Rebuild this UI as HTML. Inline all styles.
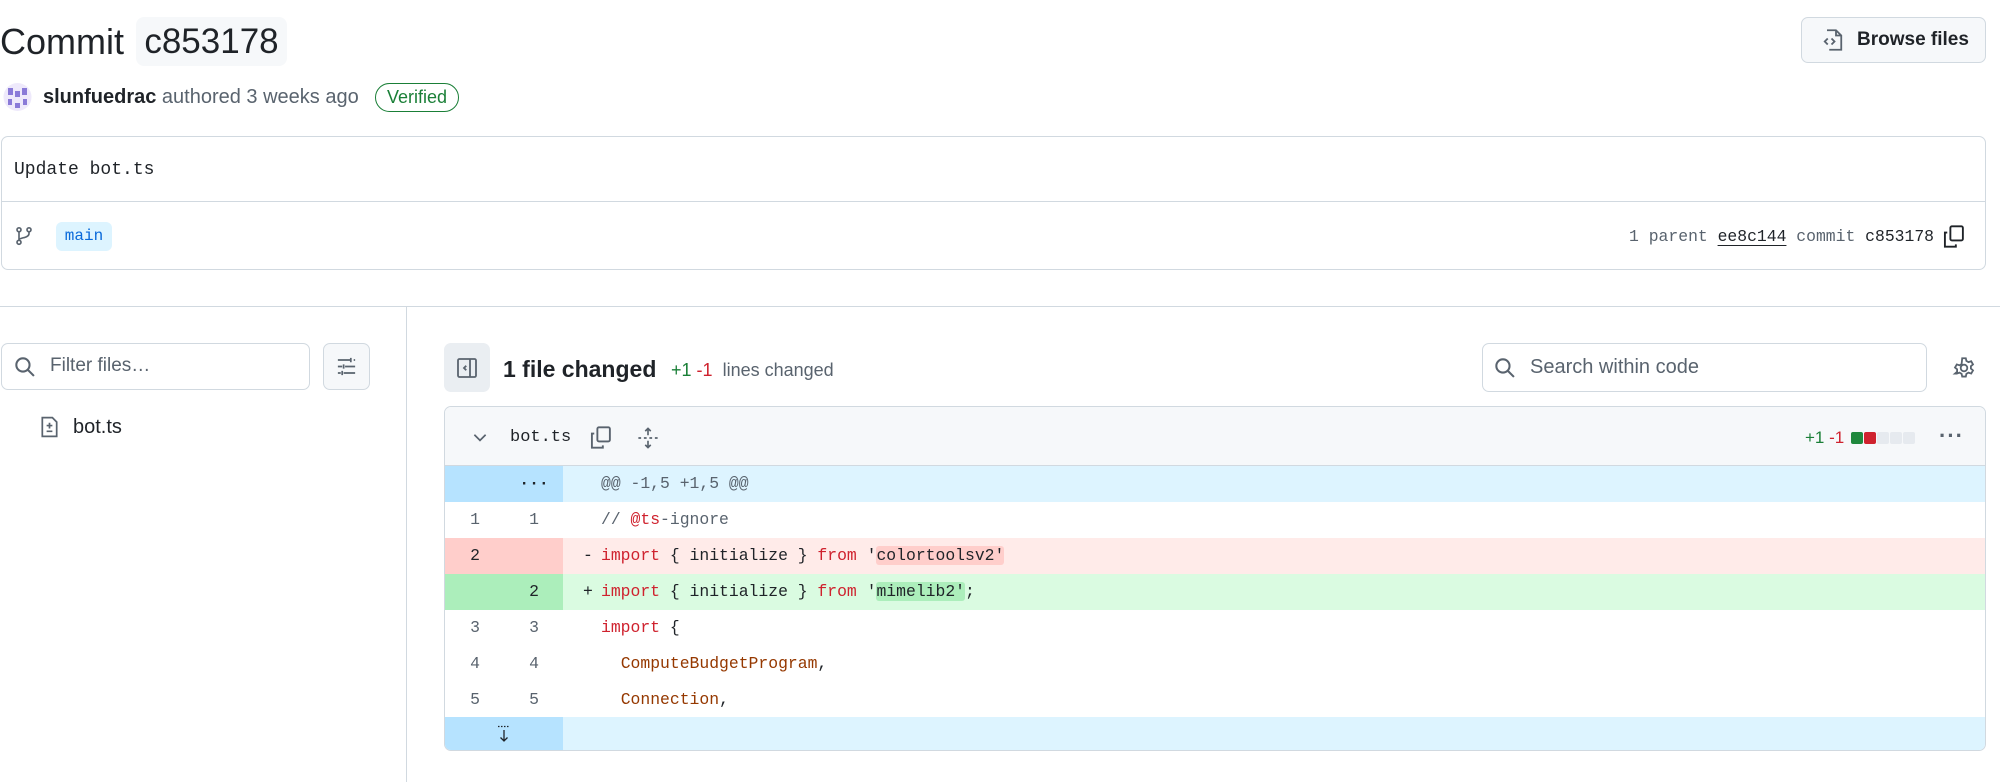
<!DOCTYPE html>
<html><head><meta charset="utf-8"><style>
*{box-sizing:border-box;margin:0;padding:0}
body{width:2000px;height:782px;background:#fff;position:relative;overflow:hidden;font-family:"Liberation Sans",sans-serif;color:#1f2328}
.a{position:absolute}
.mono{font-family:"Liberation Mono",monospace}
.row{position:absolute;left:0;right:0;height:36px;font-family:"Liberation Mono",monospace;font-size:16.4px;line-height:36px}
.n1,.n2{position:absolute;top:0;width:60px;text-align:center;color:#59636e;height:36px}
.n1{left:0}.n2{left:60px;width:58px}
.code{position:absolute;left:156px;top:0;white-space:pre}
.sg{position:absolute;left:138px;top:0}
.k{color:#cf222e}.o{color:#953800}.c{color:#59636e}.s{color:#1f2328}
</style></head><body>
<div class="a" style="left:0;top:17px;font-size:36px;line-height:49px">Commit</div>
<div class="a" style="left:136px;top:17px;width:151px;height:49px;background:#f6f8fa;border-radius:8px;font-size:35px;line-height:49px;text-align:center">c853178</div>
<div class="a" style="left:1801px;top:17px;width:185px;height:46px;border:1px solid #d1d9e0;border-radius:7px;background:#f6f8fa;font-size:19px;font-weight:bold;line-height:44px;padding-left:55px">Browse files</div>
<svg class="a" style="left:1821px;top:28px" width="24" height="24" viewBox="0 0 16 16" fill="none" stroke="#59636e" stroke-width="1.2"><path d="M4 1.5h6l3.5 3.5v9.5h-8M10 1.5v3.5h3.5M4.5 7l-2 2 2 2M7 7l2 2-2 2"/></svg>
<svg class="a" style="left:3px;top:82px" width="29" height="30" viewBox="0 0 29 30"><circle cx="14.5" cy="15" r="14" fill="#eee9fb"/><rect x="5" y="6" width="5" height="7" fill="#8a7ad8"/><rect x="19" y="6" width="5" height="7" fill="#8a7ad8"/><rect x="12" y="9" width="5" height="6" fill="#8a7ad8"/><rect x="5" y="17" width="4" height="6" fill="#8a7ad8"/><rect x="20" y="17" width="4" height="6" fill="#8a7ad8"/><rect x="12" y="21" width="5" height="5" fill="#8a7ad8"/></svg>
<div class="a" style="left:43px;top:84px;font-size:20px;line-height:26px"><b>slunfuedrac</b> <span style="color:#59636e">authored 3 weeks ago</span></div>
<div class="a" style="left:375px;top:83px;width:84px;height:29px;border:1.5px solid #1a7f37;border-radius:15px;color:#1a7f37;font-size:18px;line-height:26px;text-align:center">Verified</div>
<div class="a" style="left:1px;top:136px;width:1985px;height:134px;border:1px solid #d1d9e0;border-radius:7px"></div>
<div class="a" style="left:1px;top:201px;width:1985px;height:1px;background:#d1d9e0"></div>
<div class="a mono" style="left:14px;top:158px;font-size:18px;line-height:24px">Update bot.ts</div>
<svg class="a" style="left:14px;top:226px" width="20" height="20" viewBox="0 0 16 16" fill="none" stroke="#59636e" stroke-width="1.3"><circle cx="4" cy="3" r="1.6"/><circle cx="12" cy="3" r="1.6"/><circle cx="4" cy="13" r="1.6"/><path d="M4 4.6v6.8M12 4.6v1.4c0 2-2 3-5 3.5L4 10.5"/></svg>
<div class="a mono" style="left:56px;top:222px;width:56px;height:29px;background:#ddf4ff;border-radius:6px;color:#0969da;font-size:16px;line-height:29px;text-align:center">main</div>
<div class="a mono" style="left:1500px;top:224px;width:434px;text-align:right;font-size:16.4px;line-height:26px;color:#59636e">1 parent <span style="color:#1f2328;text-decoration:underline;text-underline-offset:4px">ee8c144</span> commit <span style="color:#1f2328">c853178</span></div>
<svg class="a" style="left:1941px;top:224px" width="25" height="25" viewBox="0 0 16 16" fill="none" stroke="#1f2328" stroke-width="1.2"><path d="M4 5.5H2.5v9h7V13"/><rect x="6" y="1.5" width="8" height="9" rx="1"/></svg>
<div class="a" style="left:0;top:306px;width:2000px;height:1px;background:#d1d9e0"></div>
<div class="a" style="left:406px;top:306px;width:1px;height:476px;background:#d1d9e0"></div>
<div class="a" style="left:1px;top:343px;width:309px;height:47px;border:1px solid #d1d9e0;border-radius:7px"></div>
<svg class="a" style="left:14px;top:356px" width="22" height="22" viewBox="0 0 16 16" fill="none" stroke="#59636e" stroke-width="1.5"><circle cx="6.5" cy="6.5" r="4.8"/><path d="M10 10l4.5 4.5"/></svg>
<div class="a" style="left:50px;top:354px;font-size:19px;line-height:24px;color:#59636e">Filter files…</div>
<div class="a" style="left:323px;top:343px;width:47px;height:47px;border:1px solid #d1d9e0;border-radius:7px;background:#f6f8fa"></div>
<svg class="a" style="left:335px;top:355px" width="23" height="23" viewBox="0 0 16 16" fill="none" stroke="#59636e" stroke-width="1.2"><path d="M2 3.5h9M13 3.5h1M11 2v3M2 8h3M7 8h7M6 6.5v3M2 12.5h2M6 12.5h8M5 11v3"/></svg>
<svg class="a" style="left:38px;top:415px" width="23" height="24" viewBox="0 0 16 16" fill="none" stroke="#59636e" stroke-width="1.2"><path d="M3 1.5h7l3 3v10H3z"/><path d="M8 5v4M6 7h4M6 11h4"/></svg>
<div class="a" style="left:73px;top:415px;font-size:20px;line-height:24px">bot.ts</div>
<div class="a" style="left:444px;top:343px;width:46px;height:49px;border-radius:7px;background:#eaeef2"></div>
<svg class="a" style="left:455px;top:356px" width="24" height="24" viewBox="0 0 16 16" fill="none" stroke="#59636e" stroke-width="1.2"><rect x="2" y="2" width="12" height="12" rx="1"/><path d="M10 2v12M7.5 6.5L6 8l1.5 1.5"/></svg>
<div class="a" style="left:503px;top:354px;font-size:23px;font-weight:bold;line-height:30px">1 file changed</div>
<div class="a" style="left:671px;top:358px;font-size:18px;line-height:24px"><span style="color:#1a7f37">+1</span> <span style="color:#cf222e">-1</span> &nbsp;<span style="color:#59636e">lines changed</span></div>
<div class="a" style="left:1482px;top:343px;width:445px;height:49px;border:1px solid #d1d9e0;border-radius:7px"></div>
<svg class="a" style="left:1494px;top:357px" width="22" height="22" viewBox="0 0 16 16" fill="none" stroke="#59636e" stroke-width="1.5"><circle cx="6.5" cy="6.5" r="4.8"/><path d="M10 10l4.5 4.5"/></svg>
<div class="a" style="left:1530px;top:355px;font-size:20px;line-height:24px;color:#59636e">Search within code</div>
<svg class="a" style="left:1952px;top:356px" width="24" height="24" viewBox="0 0 16 16" fill="none" stroke="#59636e" stroke-width="1.2"><circle cx="8" cy="8" r="2.2"/><path d="M6.8 1.5h2.4l.4 1.8 1.4.8 1.8-.6 1.2 2.1-1.4 1.2v1.6l1.4 1.2-1.2 2.1-1.8-.6-1.4.8-.4 1.8H6.8l-.4-1.8-1.4-.8-1.8.6L2 11.7l1.4-1.2V8.9L2 7.7l1.2-2.1 1.8.6 1.4-.8z"/></svg>
<div class="a" style="left:444px;top:406px;width:1542px;height:345px;border:1px solid #d1d9e0;border-radius:7px;overflow:hidden">
 <div class="a" style="left:0;top:0;right:0;height:59px;background:#f6f8fa;border-bottom:1px solid #d1d9e0"></div>
 <svg class="a" style="left:26px;top:21px" width="18" height="18" viewBox="0 0 16 16" fill="none" stroke="#59636e" stroke-width="1.5"><path d="M3 6l5 5 5-5"/></svg>
 <div class="a mono" style="left:65px;top:19px;font-size:17px;line-height:24px">bot.ts</div>
 <svg class="a" style="left:143px;top:18px" width="25" height="25" viewBox="0 0 16 16" fill="none" stroke="#59636e" stroke-width="1.2"><path d="M4 5.5H2.5v9h7V13"/><rect x="6" y="1.5" width="8" height="9" rx="1"/></svg>
 <svg class="a" style="left:192px;top:19px" width="22" height="24" viewBox="0 0 16 16" fill="none" stroke="#59636e" stroke-width="1.2"><path d="M8 1v5M6 3l2-2 2 2M8 15v-5M6 13l2 2 2-2M1 8h2M5 8h2M9 8h2M13 8h2" /></svg>
 <div class="a" style="left:1360px;top:19px;font-size:17px;line-height:24px"><span style="color:#1a7f37">+1</span> <span style="color:#cf222e">-1</span></div>
 <div class="a" style="left:1406px;top:25px;width:12px;height:12px;background:#1f883d;border-radius:2px"></div>
 <div class="a" style="left:1419px;top:25px;width:12px;height:12px;background:#cf222e;border-radius:2px"></div>
 <div class="a" style="left:1432px;top:25px;width:12px;height:12px;background:#e6eaef;border-radius:2px"></div>
 <div class="a" style="left:1445px;top:25px;width:12px;height:12px;background:#e6eaef;border-radius:2px"></div>
 <div class="a" style="left:1458px;top:25px;width:12px;height:12px;background:#e6eaef;border-radius:2px"></div>
 <div class="a" style="left:1494px;top:16px;font-size:22px;font-weight:bold;color:#59636e;letter-spacing:1px">···</div>
 <div class="row" style="top:59px;background:#ddf4ff"><div class="a" style="left:0;top:0;width:118px;height:36px;background:#b6e3ff"></div><div class="n2" style="color:#1f2328;font-weight:bold">···</div><div class="code c">@@ -1,5 +1,5 @@</div></div>
 <div class="row" style="top:95px"><div class="n1">1</div><div class="n2">1</div><div class="code"><span class="c">// </span><span class="k">@ts</span><span class="c">-ignore</span></div></div>
 <div class="row" style="top:131px;background:#ffebe9"><div class="a" style="left:0;top:0;width:118px;height:36px;background:#ffcecb"></div><div class="n1" style="color:#1f2328">2</div><div class="sg">-</div><div class="code"><span class="k">import</span> { initialize } <span class="k">from</span> <span class="s">'<span style="background:#ffcecb;border-radius:3px">colortoolsv2'</span></span></div></div>
 <div class="row" style="top:167px;background:#dafbe1"><div class="a" style="left:0;top:0;width:118px;height:36px;background:#aceebb"></div><div class="n2" style="color:#1f2328">2</div><div class="sg">+</div><div class="code"><span class="k">import</span> { initialize } <span class="k">from</span> <span class="s">'<span style="background:#aceebb;border-radius:3px">mimelib2'</span>;</span></div></div>
 <div class="row" style="top:203px"><div class="n1">3</div><div class="n2">3</div><div class="code"><span class="k">import</span> {</div></div>
 <div class="row" style="top:239px"><div class="n1">4</div><div class="n2">4</div><div class="code">  <span class="o">ComputeBudgetProgram</span>,</div></div>
 <div class="row" style="top:275px"><div class="n1">5</div><div class="n2">5</div><div class="code">  <span class="o">Connection</span>,</div></div>
 <div class="row" style="top:310px;height:35px;background:#ddf4ff"><div class="a" style="left:0;top:0;width:118px;height:35px;background:#b6e3ff"></div>
 <svg class="a" style="left:51px;top:8px" width="16" height="18" viewBox="0 0 16 18" fill="none" stroke="#1f2328" stroke-width="1.3"><path d="M2 1.5h12" stroke-dasharray="1.5 1.5"/><path d="M8 5v11M4.5 12.5L8 16l3.5-3.5"/></svg></div>
</div>
</body></html>
